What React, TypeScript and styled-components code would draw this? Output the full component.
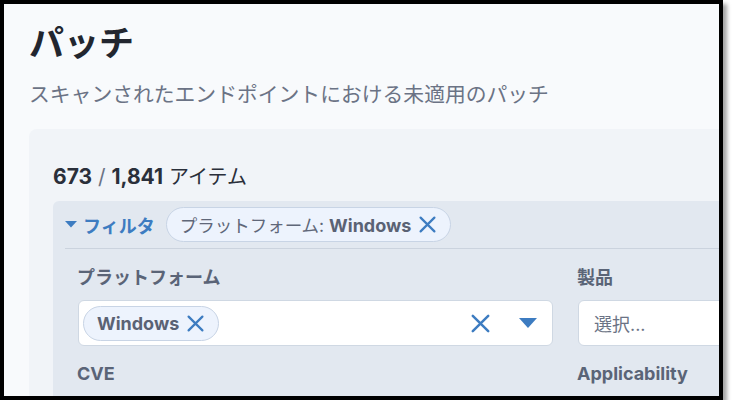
import React from "react";
import styled, { createGlobalStyle } from "styled-components";

const Global = createGlobalStyle`
  html, body { margin: 0; padding: 0; background: #ffffff; }
  body { font-family: Inter, "Noto Sans CJK JP", sans-serif; }
  * { box-sizing: border-box; }
`;

const Frame = styled.div`
  width: 723px;
  height: 400px;
  border: 4px solid #000;
  box-shadow: 4px 4px 4px rgba(0, 0, 0, 0.35);
  background: #f8fafc;
  overflow: hidden;
  padding: 18px 0 0 25px;
`;

const Title = styled.h1`
  margin: 0;
  font-size: 35px;
  line-height: 42px;
  font-weight: 700;
  color: #22262f;
`;

const Subtitle = styled.p`
  margin: 16px 0 0 0;
  font-size: 20.8px;
  line-height: 30px;
  color: #6b7385;
`;

const Card = styled.section`
  margin-top: 19px;
  width: 760px;
  background: #f1f4f8;
  border-radius: 8px 0 0 8px;
  padding: 34px 0 0 24px;
`;

const Count = styled.div`
  font-size: 21px;
  line-height: 28px;
  color: #2a2f3a;
  strong { font-weight: 700; }
  .sep { color: #6b7385; font-weight: 400; }
  .unit { font-size: 20px; }
`;

const Panel = styled.div`
  margin-top: 10px;
  background: #e2e8f0;
  border-radius: 6px 0 0 6px;
  padding-bottom: 20px;
`;

const Header = styled.div`
  display: flex;
  align-items: center;
  height: 47px;
  padding: 0 12px;
  gap: 11px;
`;

const Toggle = styled.button`
  display: flex;
  align-items: center;
  gap: 6px;
  border: 0;
  background: none;
  padding: 0;
  font-family: inherit;
  font-size: 18px;
  font-weight: 700;
  color: #3d7cc1;
  cursor: pointer;
`;

const Chip = styled.span<{ $sub?: boolean }>`
  display: inline-flex;
  align-items: center;
  gap: 8px;
  height: 35px;
  padding: 0 14px 0 13px;
  border-radius: 999px;
  background: #edf3fd;
  border: 1px solid #c8d4e5;
  font-size: ${(p) => (p.$sub ? 17.5 : 18)}px;
  color: #5f6779;
  white-space: nowrap;
  b { font-weight: 700; color: #5a6274; font-size: 18px; }
`;

const Divider = styled.hr`
  margin: 0 0 0 12px;
  border: 0;
  border-top: 1px solid #cbd3de;
`;

const Grid = styled.div`
  display: grid;
  grid-template-columns: 476px 476px;
  column-gap: 24px;
  padding: 16px 0 0 24px;
`;

const Field = styled.div`
  display: flex;
  flex-direction: column;
`;

const Label = styled.label`
  font-size: 18px;
  line-height: 26px;
  font-weight: 700;
  color: #5a6477;
  margin-bottom: 9px;
`;

const Input = styled.div`
  display: flex;
  align-items: center;
  height: 46px;
  background: #fff;
  border: 1px solid #cfd8e3;
  border-radius: 6px;
  padding: 0 15px 0 4px;
  margin-left: 1px;
`;

const Placeholder = styled.span`
  font-size: 18px;
  color: #6b7385;
  padding-left: 11px;
`;

const Spacer = styled.div`
  flex: 1;
`;

const ClearBtn = styled.span`
  display: inline-flex;
  margin-right: 29px;
`;

const Row2 = styled.div`
  margin-top: 15px;
`;

const X = ({ size = 16 }: { size?: number }) => (
  <svg width={size} height={size} viewBox="0 0 16 16">
    <path d="M1.5 1.5 L14.5 14.5 M14.5 1.5 L1.5 14.5" stroke="#3d7cc1" strokeWidth="2.1" strokeLinecap="round" fill="none" />
  </svg>
);

const Caret = ({ w = 12 }: { w?: number }) => (
  <svg width={w} height={w * 0.55} viewBox="0 0 10 5.5">
    <path d="M0 0 L10 0 L5 5.5 Z" fill="#3d7cc1" />
  </svg>
);

export default function App() {
  return (
    <>
      <Global />
      <Frame>
        <Title>パッチ</Title>
        <Subtitle>スキャンされたエンドポイントにおける未適用のパッチ</Subtitle>
        <Card>
          <Count>
            <strong>673</strong> <span className="sep">/</span> <strong>1,841</strong>{" "}
            <span className="unit">アイテム</span>
          </Count>
          <Panel>
            <Header>
              <Toggle>
                <Caret w={12} />
                フィルタ
              </Toggle>
              <Chip $sub>
                <span>
                  プラットフォーム: <b>Windows</b>
                </span>
                <X size={17} />
              </Chip>
            </Header>
            <Divider />
            <Grid>
              <Field>
                <Label>プラットフォーム</Label>
                <Input>
                  <Chip>
                    <b>Windows</b>
                    <X size={17} />
                  </Chip>
                  <Spacer />
                  <ClearBtn>
                    <X size={19} />
                  </ClearBtn>
                  <Caret w={18} />
                </Input>
              </Field>
              <Field>
                <Label>製品</Label>
                <Input>
                  <Placeholder>選択...</Placeholder>
                </Input>
              </Field>
              <Row2>
                <Label>CVE</Label>
              </Row2>
              <Row2>
                <Label>Applicability</Label>
              </Row2>
            </Grid>
          </Panel>
        </Card>
      </Frame>
    </>
  );
}
